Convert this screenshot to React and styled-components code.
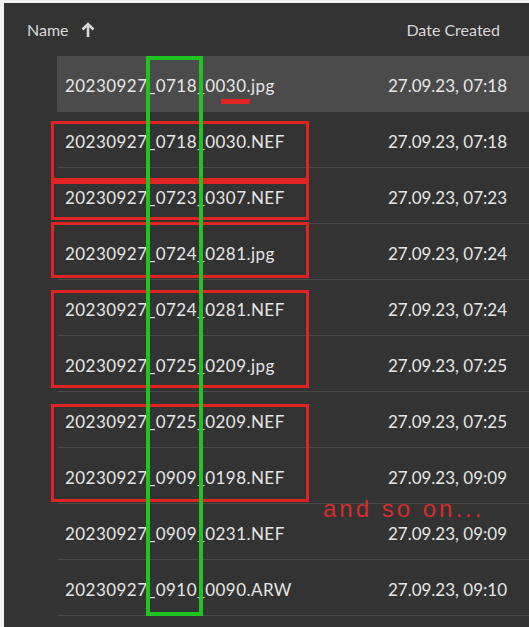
import styled, { createGlobalStyle } from "styled-components";

const GlobalStyle = createGlobalStyle`
    html, body {
        margin: 0;
        background: #f2f2f2;
    }
    body {
        font-family: Lato, "Open Sans", sans-serif;
    }
`;

const files = [
    { name: "20230927_0718_0030.jpg", date: "27.09.23, 07:18", selected: true },
    { name: "20230927_0718_0030.NEF", date: "27.09.23, 07:18" },
    { name: "20230927_0723_0307.NEF", date: "27.09.23, 07:23" },
    { name: "20230927_0724_0281.jpg", date: "27.09.23, 07:24" },
    { name: "20230927_0724_0281.NEF", date: "27.09.23, 07:24" },
    { name: "20230927_0725_0209.jpg", date: "27.09.23, 07:25" },
    { name: "20230927_0725_0209.NEF", date: "27.09.23, 07:25" },
    { name: "20230927_0909_0198.NEF", date: "27.09.23, 09:09" },
    { name: "20230927_0909_0231.NEF", date: "27.09.23, 09:09" },
    { name: "20230927_0910_0090.ARW", date: "27.09.23, 09:10" },
];

// Red boxes drawn over the list: [top, height] in page pixels.
const redBoxes = [
    [121, 60],
    [181, 39],
    [222, 56],
    [290, 98],
    [404, 98],
];

const Page = styled.div`
    padding: 3px 0 0 4px;
    height: 627px;
    box-sizing: border-box;
`;

const Panel = styled.div`
    position: relative;
    background: #333333;
    height: 100%;
    overflow: hidden;
    color: #e6e6e6;
`;

const Header = styled.div`
    display: flex;
    align-items: center;
    justify-content: space-between;
    height: 53px;
    padding: 0 29px 0 23px;
    font-size: 16px;
    color: #d8d8d8;
`;

const SortLabel = styled.div`
    display: flex;
    align-items: center;
    gap: 12px;
`;

const List = styled.div`
    margin-left: 53px;
`;

const Row = styled.div`
    display: flex;
    align-items: center;
    justify-content: space-between;
    height: 52px;
    padding: 3px 22px 0 8px;
    border-bottom: 1px solid #4a4a4a;
    background: ${(p) => (p.$selected ? "#4b4b4b" : "transparent")};
    font-size: 17px;
`;

// Filenames in the reference font run a little wider than Lato.
const FileName = styled.span`
    letter-spacing: 0.45px;
`;

const DateCell = styled.span`
    letter-spacing: 0;
`;

const RedBox = styled.div`
    position: absolute;
    left: 47px;
    width: 258px;
    border: 3px solid #e02424;
    box-sizing: border-box;
`;

const GreenBox = styled.div`
    position: absolute;
    left: 142px;
    top: 53px;
    width: 57px;
    height: 560px;
    border: 4px solid #1fc41f;
    box-sizing: border-box;
`;

const Underline = styled.div`
    position: absolute;
    left: 217px;
    top: 96px;
    width: 29px;
    height: 5px;
    background: #e02424;
`;

const Note = styled.div`
    position: absolute;
    left: 319px;
    top: 492px;
    font-family: "Liberation Sans", Arial, sans-serif;
    font-size: 24px;
    letter-spacing: 3px;
    color: #d92c2c;
`;

const UpArrow = () => (
    <svg width="14" height="16" viewBox="0 0 14 16">
        <path
            d="M7 2 V15 M1.5 7.5 L7 2 L12.5 7.5"
            stroke="#d8d8d8"
            strokeWidth="2.6"
            fill="none"
        />
    </svg>
);

const App = () => (
    <Page>
        <GlobalStyle />
        <Panel>
            <Header>
                <SortLabel>
                    Name <UpArrow />
                </SortLabel>
                <span>Date Created</span>
            </Header>
            <List>
                {files.map((f) => (
                    <Row key={f.name} $selected={f.selected}>
                        <FileName>{f.name}</FileName>
                        <DateCell>{f.date}</DateCell>
                    </Row>
                ))}
            </List>
            {redBoxes.map(([top, height]) => (
                <RedBox key={top} style={{ top: top - 3, height }} />
            ))}
            <GreenBox />
            <Underline />
            <Note>and so on...</Note>
        </Panel>
    </Page>
);

export default App;
